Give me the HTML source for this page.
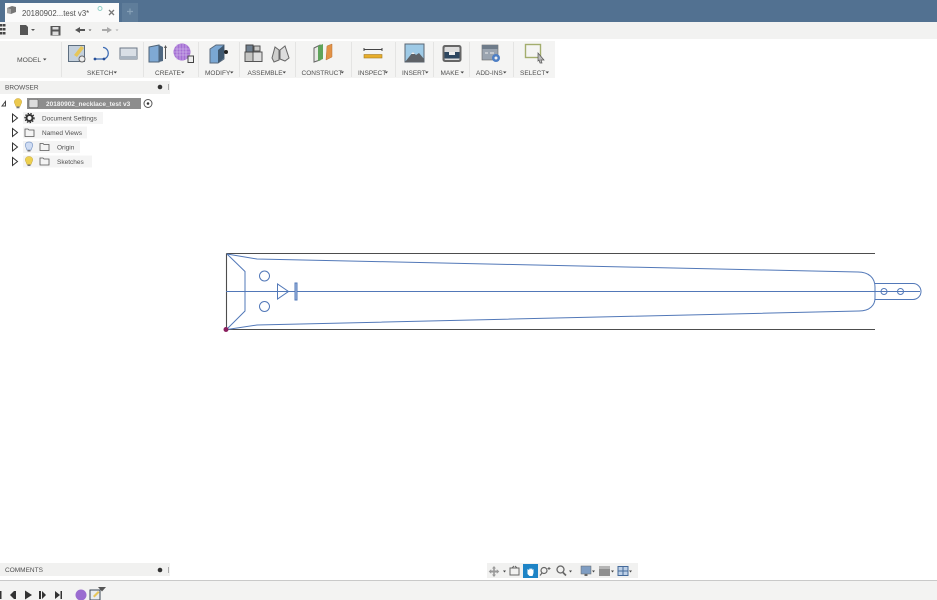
<!DOCTYPE html>
<html><head><meta charset="utf-8"><style>
html,body{margin:0;padding:0;background:#fff}
body{width:937px;height:600px;overflow:hidden;position:relative}
svg{position:absolute;left:0;top:0;filter:blur(.3px)}
text{font-family:"Liberation Sans",sans-serif;font-size:6.5px;fill:#4f4f4f}
</style></head><body>
<svg width="937" height="600" viewBox="0 0 937 600">
<!-- title bar -->
<rect width="937" height="22" fill="#527191"/>
<rect x="122" y="3" width="16" height="19" fill="#5f7d9a"/>
<path d="M127 11.500h6M130 8.500v6" stroke="#86a0b6" stroke-width="1.200"/>
<rect x="5" y="3" width="114" height="19" fill="#fbfbfb"/>
<path d="M7 8l5-2 4 1v5l-5 2-4-1z" fill="#777"/><path d="M7 8l4 1v5l-4-1z" fill="#a5a5a5"/>
<text x="22" y="16" style="font-size:7.800px" fill="#555">20180902...test v3*</text>
<circle cx="100" cy="8.500" r="2" fill="none" stroke="#8fd0c8"/>
<path d="M109 10l5 5M114 10l-5 5" stroke="#777" stroke-width="1.300"/>
<!-- quick access -->
<rect y="22" width="937" height="17" fill="#f2f2f1"/>
<path d="M0 24h2.500v2.500H0zM3 24h2.500v2.500H3zM0 28h2.500v2.500H0zM3 28h2.500v2.500H3zM0 32h2.500v2.500H0zM3 32h2.500v2.500H3z" fill="#444"/>
<path d="M20 25h6l2 2v8h-8z" fill="#555"/><path d="M31 29h4l-2 2z" fill="#555"/>
<rect x="50.500" y="26" width="10" height="9.500" fill="#555"/><rect x="52.500" y="27" width="6" height="2.500" fill="#ddd"/><rect x="52.500" y="31.500" width="6" height="3.500" fill="#ddd"/>
<path d="M80 27l-5 3 5 3v-2h5v-2h-5z" fill="#555"/><path d="M88.500 29.500h3l-1.500 1.500z" fill="#555"/>
<path d="M107 27l5 3-5 3v-2h-5v-2h5z" fill="#aaa"/><path d="M115.500 29.500h3l-1.500 1.500z" fill="#aaa"/>
<!-- toolbar -->
<rect y="41" width="555" height="37" fill="#f4f4f3"/>
<g stroke="#e4e4e3"><path d="M61.500 42v35M143.500 42v35M198.500 42v35M239.500 42v35M295.500 42v35M351.500 42v35M395.500 42v35M433.500 42v35M469.500 42v35M513.500 42v35"/></g>
<g>
<text x="17" y="62" style="font-size:6.800px" fill="#333">MODEL</text><path d="M43 58.500h3.500l-1.750 2z" fill="#444"/>
<text x="87" y="75">SKETCH</text><path d="M113.500 71.500h3.500l-1.750 2z" fill="#444"/>
<text x="155" y="75">CREATE</text><path d="M181 71.500h3.500l-1.750 2z" fill="#444"/>
<text x="205" y="75">MODIFY</text><path d="M230 71.500h3.500l-1.750 2z" fill="#444"/>
<text x="247.500" y="75">ASSEMBLE</text><path d="M282.500 71.500h3.500l-1.750 2z" fill="#444"/>
<text x="301.500" y="75">CONSTRUCT</text><path d="M340.500 71.500h3.500l-1.750 2z" fill="#444"/>
<text x="358" y="75">INSPECT</text><path d="M384.500 71.500h3.500l-1.750 2z" fill="#444"/>
<text x="402" y="75">INSERT</text><path d="M425 71.500h3.500l-1.750 2z" fill="#444"/>
<text x="440.500" y="75">MAKE</text><path d="M460.500 71.500h3.500l-1.750 2z" fill="#444"/>
<text x="476" y="75">ADD-INS</text><path d="M503 71.500h3.500l-1.750 2z" fill="#444"/>
<text x="520" y="75">SELECT</text><path d="M545.500 71.500h3.500l-1.750 2z" fill="#444"/>
</g>
<!-- sketch icons -->
<rect x="68.500" y="45.500" width="16" height="16" fill="#c4d0dc" stroke="#5d6e80"/><path d="M74 55l7-9 3 2-7 9z" fill="#e6c65a"/><circle cx="82" cy="59" r="3" fill="#eee" stroke="#666"/>
<path d="M94 59h10a6 6 0 0 0 0-11.500h-1" fill="none" stroke="#3f6db5" stroke-width="1.300"/><circle cx="95" cy="59" r="1.400" fill="#274f98"/><circle cx="104" cy="59" r="1.400" fill="#274f98"/>
<rect x="120" y="48" width="17" height="11" fill="#d9dfe6" stroke="#6c7787"/><path d="M120 56h17v3h-17z" fill="#a9b4c0"/>
<!-- create -->
<path d="M149 47l10-2v17h-10z" fill="#7fa9d4" stroke="#4f6478"/><path d="M159 45l4 2v14l-4 1z" fill="#4e6780"/><path d="M165.500 47v12" stroke="#555"/><path d="M164 48l1.500-3 1.500 3z" fill="#555"/>
<circle cx="182" cy="52" r="8.500" fill="#a46fd3"/><path d="M174 49h16M174 52h16M174 55h16M177 44v16M180 44v16M183 44v16M186 44v16" stroke="#d9c5ef" stroke-width=".6"/><rect x="188" y="56" width="5.500" height="6.500" fill="#eee" stroke="#444"/>
<!-- modify -->
<path d="M210 49l6-4h8v14l-6 4h-8z" fill="#7aa7d3" stroke="#59697b"/><path d="M218 63V50l6-5v13z" fill="#3f5870"/><circle cx="226" cy="52" r="2" fill="#222"/>
<!-- assemble -->
<rect x="245" y="52" width="8" height="9.500" fill="#c5c5c3" stroke="#555"/><rect x="253" y="52" width="9" height="9.500" fill="#dedede" stroke="#555"/><rect x="246" y="45" width="7" height="7" fill="#6f7f8f" stroke="#444"/><path d="M254 46h6v5h-6z" fill="#c9c9c7" stroke="#555"/>
<path d="M272 58l3-11 4 3v10l-5 2z" fill="#cfcfcd" stroke="#666"/><path d="M280 50l5-4 4 12-4 3-5-2z" fill="#ddd" stroke="#666"/>
<!-- construct -->
<path d="M314 48l6-3v15l-6 2z" fill="#e9e9e6" stroke="#666"/><path d="M318 46l5-2v15l-5 2z" fill="#5fa45b"/><path d="M326 60l6-3 0-13-5 2z" fill="#e39245" stroke="#b8723a" stroke-width=".5"/>
<!-- inspect -->
<path d="M364 49.500h18M364 48v3M382 48v3" stroke="#444" stroke-width="1"/><rect x="364" y="54.500" width="18" height="3.500" fill="#e7ad2a" stroke="#a47b26" stroke-width=".6"/>
<!-- insert -->
<rect x="405" y="44" width="19" height="18" fill="#9ecae6" stroke="#5a6673"/><path d="M405 62l8-10 3 3 3-2 5 6v3z" fill="#5e6267"/><path d="M411 54l2-2 2 2z" fill="#eee"/>
<!-- make -->
<rect x="442.500" y="45" width="19" height="17" rx="2.500" fill="#666"/><rect x="444.500" y="47" width="15" height="13" rx="1" fill="#ddd"/><rect x="444.500" y="52" width="15" height="6.500" fill="#2e4760"/><rect x="449" y="52" width="6" height="3" fill="#eee"/>
<!-- addins -->
<rect x="482" y="45" width="16" height="15" fill="#9aa4b0" stroke="#666" stroke-width=".6"/><rect x="482" y="45" width="16" height="4" fill="#6f7c8a"/><path d="M485 53h3M490 53h4" stroke="#eee"/><circle cx="496" cy="58" r="4" fill="#4e7fc4"/><circle cx="496" cy="58" r="1.500" fill="#eee"/>
<!-- select -->
<rect x="525.500" y="44.500" width="15" height="13" fill="none" stroke="#a3ad6d" stroke-width="1.400"/><path d="M538 53l6 7-3 0 1 3-2 0-1-3-1 1z" fill="#bbb" stroke="#555" stroke-width=".7"/>

<!-- browser -->
<rect y="81" width="170" height="13" fill="#f1f1f0"/>
<text x="5" y="89.500" fill="#777">BROWSER</text>
<circle cx="160" cy="87" r="2.300" fill="#333"/><path d="M168.500 84v6" stroke="#aaa"/>
<path d="M2 106l3.500-4.500v4.500z" fill="none" stroke="#444"/>
<path d="M18 98.500c-3.500 0-4.500 3.500-3 5.500l1 2.500h4l1-2.500c1.500-2 .5-5.500-3-5.500z" fill="#ecc94e" stroke="#c6a63e" stroke-width=".5"/><rect x="16.500" y="106.500" width="3" height="1.800" fill="#777"/>
<rect x="27" y="98" width="114" height="11" fill="#8d8d8d"/>
<rect x="29" y="99.500" width="9" height="8" rx="1" fill="#ddd" stroke="#666" stroke-width=".6"/>
<text x="46" y="106" style="font-weight:bold;font-size:6.500px;fill:#f2f2f2">20180902_necklace_test v3</text>
<circle cx="148" cy="103.500" r="4" fill="#fff" stroke="#555"/><circle cx="148" cy="103.500" r="1.300" fill="#333"/>
<g fill="none" stroke="#333" stroke-width="1"><path d="M12.500 114l5 4-5 4zM12.500 128.500l5 4-5 4zM12.500 143l5 4-5 4zM12.500 157.500l5 4-5 4z"/></g>
<rect x="23" y="112" width="80" height="12" fill="#f4f4f4"/><rect x="23" y="126.500" width="64" height="12" fill="#f4f4f4"/><rect x="23" y="141" width="57" height="12" fill="#f4f4f4"/><rect x="23" y="155.500" width="69" height="12" fill="#f4f4f4"/>
<circle cx="29.500" cy="118" r="3" fill="none" stroke="#333" stroke-width="2"/><circle cx="29.500" cy="118" r="4.600" fill="none" stroke="#333" stroke-width="1.200" stroke-dasharray="1.500 1.300"/>
<text x="42" y="120.500">Document Settings</text>
<path d="M25 129h3l1 1h5v6.500h-9z" fill="#f4f4f4" stroke="#555" stroke-width=".8"/>
<text x="42" y="135">Named Views</text>
<path d="M29 142c-3.500 0-4.500 3-3 5.500l1 2.500h4l1-2.500c1.500-2.500.5-5.500-3-5.500z" fill="#cfdcf3" stroke="#7f9bc9" stroke-width=".7"/><rect x="27.500" y="150" width="3" height="1.500" fill="#777"/>
<path d="M40 143.500h3l1 1h5v6h-9z" fill="#f4f4f4" stroke="#555" stroke-width=".8"/>
<text x="57" y="149.500">Origin</text>
<path d="M29 156.500c-3.500 0-4.500 3-3 5.500l1 2.500h4l1-2.500c1.500-2.500.5-5.500-3-5.500z" fill="#edd04e" stroke="#c6a63e" stroke-width=".5"/><rect x="27.500" y="164.500" width="3" height="1.500" fill="#777"/>
<path d="M40 158h3l1 1h5v6h-9z" fill="#f4f4f4" stroke="#555" stroke-width=".8"/>
<text x="57" y="164">Sketches</text>

<!-- sketch -->
<g fill="none" stroke="#4d4d4d" stroke-width="1.100"><path d="M226.500 253.500H875M226.500 329.500H875M226.500 253.500V330"/></g>
<g fill="none" stroke="#5278b8" stroke-width="1">
<path d="M226 291.500H920"/>
<path d="M227 254l18 17.500v39.500L227 329"/>
<path d="M227 254l30 5L858 272c11 0 17 6 17 15v11c0 7-5 13-16 13L257 325 227 329.500"/>
<circle cx="264.500" cy="276" r="5"/><circle cx="264.500" cy="306.500" r="5"/>
<path d="M277.500 284v15l11-7.500z"/>
<rect x="295" y="283" width="2" height="17" fill="#a9c0e3"/>
<path d="M875 283.500h38a7.500 7.500 0 0 1 0 16h-38"/>
<circle cx="884" cy="291.500" r="3"/><circle cx="900.500" cy="291.500" r="3"/>
</g>
<circle cx="226" cy="329.500" r="2.500" fill="#8a1f5e"/>

<!-- comments -->
<rect y="563" width="170" height="13" fill="#f1f1f0"/>
<text x="5" y="572" fill="#777">COMMENTS</text>
<circle cx="160" cy="570" r="2.300" fill="#333"/><path d="M168.500 567v6" stroke="#aaa"/>

<!-- nav bar -->
<rect x="487" y="563" width="151" height="15" fill="#f1f1f0"/>
<path d="M494 566l2 2.500h-1.200v2h2v-1.200l2.500 2.200-2.500 2.200v-1.200h-2v2h1.200L494 577l-2-2.500h1.200v-2h-2v1.200l-2.500-2.200 2.500-2.200v1.200h2v-2H492z" fill="#999"/><path d="M503 570.500h3l-1.500 2z" fill="#444"/>
<rect x="510" y="568" width="9" height="7" fill="none" stroke="#666"/><path d="M512 568l2-2M517 568l-2-2" stroke="#666"/>
<rect x="523" y="564" width="15" height="14" fill="#1e84c6"/><path d="M527.500 569v5l2 2h3l1-3v-4l-1 1-.5-2-1 1.500-1-1.500-1 2z" fill="#fff"/>
<circle cx="544" cy="570.500" r="3" fill="none" stroke="#666" stroke-width="1.200"/><path d="M542 573l-2 2.500" stroke="#666" stroke-width="1.200"/><path d="M549 567v3M547.500 568.500h3" stroke="#666"/>
<circle cx="560.500" cy="569.500" r="3.500" fill="none" stroke="#666" stroke-width="1.300"/><path d="M563 572.500l3 3" stroke="#666" stroke-width="1.700"/><path d="M569 570.500h3l-1.500 2z" fill="#444"/>
<rect x="581" y="566" width="10" height="8" fill="#7f9dc2" stroke="#666" stroke-width=".5"/><path d="M584.500 574h3v2h-3z" fill="#666"/><path d="M592 570.500h3l-1.500 2z" fill="#444"/>
<rect x="599" y="566" width="11" height="10" fill="#8f8f8f"/><rect x="599" y="566" width="11" height="3" fill="#b5b5b5"/><path d="M611 570.500h3l-1.500 2z" fill="#444"/>
<rect x="618" y="566.500" width="10" height="9" fill="#bdd0e7" stroke="#456a9a"/><path d="M623 566.500v9M618 571h10" stroke="#456a9a"/><path d="M629 570.500h3l-1.500 2z" fill="#444"/>

<!-- timeline -->
<rect y="580" width="937" height="20" fill="#f3f3f2"/>
<path d="M0 580.500H937" stroke="#c9c9c9" stroke-width="1"/>
<path d="M0 591h1.500v8H0z" fill="#333"/>
<path d="M10 595l4-4v8zM14 591h2v8h-2z" fill="#333"/>
<path d="M25 590.500l7 4.500-7 4.500z" fill="#333"/>
<path d="M39 591h2v8h-2zM42 591l4 4-4 4z" fill="#333"/>
<path d="M55 591l5 4-5 4zM60.500 591H62v8h-1.500z" fill="#333"/>
<circle cx="81" cy="595" r="5.500" fill="#9a6cd0"/>
<rect x="90" y="590" width="10" height="10" fill="#e8ecf0" stroke="#3e4a57"/><path d="M93 596l5-5 1.500 1.500-5 5z" fill="#e6c65a"/>
<path d="M98 587h8l-4 4.500z" fill="#555"/>
</svg>
</body></html>
